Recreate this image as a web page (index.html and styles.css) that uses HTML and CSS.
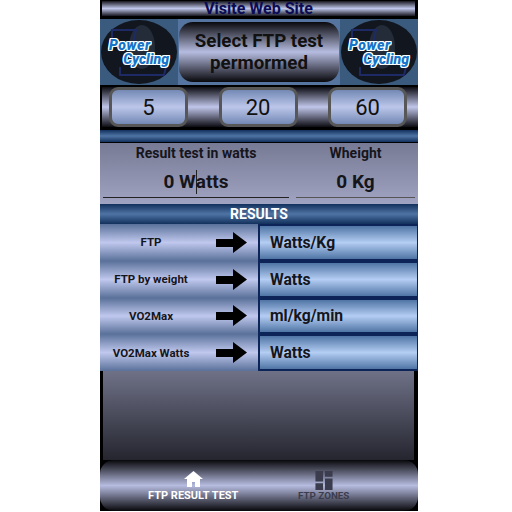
FILE: index.html
```html
<!DOCTYPE html>
<html lang="en">
<head>
  <meta charset="UTF-8">
  <meta name="viewport" content="width=device-width, initial-scale=1.0">
  <title>FTP Test</title>
  <link rel="stylesheet" href="styles.css">
</head>
<body>
  <main class="phone">
    <div class="web-link">Visite Web Site</div>

    <div class="head">
      <div class="logo">
        <svg class="logo-art" viewBox="0 0 78 66">
          <ellipse cx="39" cy="33" rx="38" ry="32" fill="#11161f"/>
          <ellipse cx="42" cy="28" rx="13" ry="22" fill="#232c38"/>
          <path d="M12 24V11h24l-3 14M20 48v8h44l2-8" fill="none" stroke="#1d2a66" stroke-width="2"/>
        </svg>
        <div class="logo-text"><span class="first">Power</span><span class="second">Cycling</span></div>
      </div>
      <div class="title">Select FTP test<br>permormed</div>
      <div class="logo">
        <svg class="logo-art" viewBox="0 0 78 66">
          <ellipse cx="39" cy="33" rx="38" ry="32" fill="#11161f"/>
          <ellipse cx="42" cy="28" rx="13" ry="22" fill="#232c38"/>
          <path d="M12 24V11h24l-3 14M20 48v8h44l2-8" fill="none" stroke="#1d2a66" stroke-width="2"/>
        </svg>
        <div class="logo-text"><span class="first">Power</span><span class="second">Cycling</span></div>
      </div>
    </div>

    <div class="tests">
      <button class="test">5</button>
      <button class="test">20</button>
      <button class="test">60</button>
    </div>

    <div class="blue-bar"></div>

    <div class="inputs">
      <div class="field field-watts">
        <label>Result test in watts</label>
        <div class="value"><span>0 W</span><i class="caret"></i><span>atts</span></div>
      </div>
      <div class="field field-kg">
        <label>Wheight</label>
        <div class="value">0 Kg</div>
      </div>
    </div>

    <div class="blue-bar results-head">RESULTS</div>

    <div class="results">
      <div class="row">
        <div class="name">FTP</div>
        <svg class="arrow" viewBox="0 0 31 21"><path d="M0 7h17V0l14 10.5L17 21v-6H0z"/></svg>
        <div class="unit">Watts/Kg</div>
      </div>
      <div class="row">
        <div class="name">FTP by weight</div>
        <svg class="arrow" viewBox="0 0 31 21"><path d="M0 7h17V0l14 10.5L17 21v-6H0z"/></svg>
        <div class="unit">Watts</div>
      </div>
      <div class="row">
        <div class="name">VO2Max</div>
        <svg class="arrow" viewBox="0 0 31 21"><path d="M0 7h17V0l14 10.5L17 21v-6H0z"/></svg>
        <div class="unit">ml/kg/min</div>
      </div>
      <div class="row">
        <div class="name">VO2Max Watts</div>
        <svg class="arrow" viewBox="0 0 31 21"><path d="M0 7h17V0l14 10.5L17 21v-6H0z"/></svg>
        <div class="unit">Watts</div>
      </div>
    </div>

    <div class="spacer"></div>

    <nav class="nav">
      <div class="tab active">
        <svg viewBox="0 0 19 16"><path d="M9.5 0 0 8h3v8h5v-5h3v5h5V8h3z"/></svg>
        <span>FTP RESULT TEST</span>
      </div>
      <div class="tab">
        <svg viewBox="0 0 18 20"><path d="M0 0h8v11H0zM10 0h8v6h-8zM0 13h8v7H0zM10 8h8v12h-8z"/></svg>
        <span>FTP ZONES</span>
      </div>
    </nav>
  </main>
</body>
</html>
```

FILE: styles.css
```css
* {
  box-sizing: border-box;
}
body {
  margin: 0 0 0 100px;
  background: #fff;
  font-family: Roboto, "Liberation Sans", sans-serif;
}
.phone {
  width: 318px;
  height: 511px;
  background: #000;
  display: flex;
  flex-direction: column;
  color: #000;
}
.web-link {
  height: 15px;
  margin: 1px 3px 0 2px;
  background: linear-gradient(#16161f, #c0c6ea 50%, #16161f);
  color: #0b0b55;
  font-size: 16px;
  font-weight: 700;
  line-height: 15px;
  text-align: center;
}
.head {
  height: 66px;
  margin-top: 3px;
  display: flex;
  background: #55749f;
}
.logo {
  width: 78px;
  background: #3a5a7e;
  position: relative;
  display: flex;
  align-items: center;
  justify-content: center;
  overflow: hidden;
}
.logo-art {
  position: absolute;
  inset: 0;
  width: 78px;
  height: 66px;
}
.logo-text {
  position: relative;
  width: 60px;
  display: flex;
  flex-direction: column;
  color: #1574c8;
  font-size: 14px;
  font-weight: 900;
  font-style: italic;
  line-height: 14px;
  text-shadow: 1px 0 0 #fff, -1px 0 0 #fff, 0 1px 0 #fff, 0 -1px 0 #fff, 1px 1px 0 #fff, -1px -1px 0 #fff, 1px -1px 0 #fff, -1px 1px 0 #fff;
}
.logo-text .first {
  letter-spacing: .6px;
}
.logo-text .second {
  align-self: flex-end;
}
.title {
  flex: 1;
  margin: 3px 1px;
  border-radius: 14px;
  background: linear-gradient(#08080c, #b6bce0 50%, #08080c);
  font-size: 18.7px;
  font-weight: 700;
  line-height: 22px;
  text-align: center;
  display: flex;
  align-items: center;
  justify-content: center;
  color: #111;
}
.tests {
  height: 40px;
  margin: 2px 0 0 2px;
  padding: 0 11px 0 7px;
  display: flex;
  justify-content: space-between;
  align-items: center;
  background: linear-gradient(#0c0c12, #c0c6ea 50%, #0c0c12);
}
.test {
  width: 79px;
  height: 40px;
  border: 3px solid #575757;
  border-radius: 9px;
  background: linear-gradient(#7389b4, #bcc6ea 50%, #7389b4);
  font-family: inherit;
  font-size: 22px;
  color: #111;
  padding: 0;
}
.blue-bar {
  height: 12px;
  margin-top: 3px;
  background: linear-gradient(#12305c, #4f74a4 50%, #12305c);
}
.inputs {
  height: 61px;
  margin-top: 1px;
  display: flex;
  gap: 7px;
  padding: 0 3px 0 3px;
  background: linear-gradient(#777a94, #a0a4c2);
}
.field {
  height: 55px;
  display: flex;
  flex-direction: column;
  align-items: center;
}
.field-watts {
  width: 186px;
  border-bottom: 1px solid #222;
}
.field-kg {
  flex: 1;
  border-bottom: 1px solid #555;
}
.field label {
  margin-top: 2px;
  font-size: 14px;
  font-weight: 700;
  line-height: 16px;
  color: #15151c;
}
.value {
  margin-top: 9px;
  font-size: 19px;
  font-weight: 700;
  line-height: 24px;
  color: #15151c;
  display: flex;
  white-space: pre;
}
.caret {
  width: 1px;
  height: 24px;
  margin-right: -1px;
  background: #222;
}
.results-head {
  height: 20px;
  margin-top: 0;
  color: #fff;
  font-size: 14px;
  font-weight: 700;
  line-height: 20px;
  text-align: center;
}
.results {
  height: 147px;
  display: flex;
  flex-direction: column;
  background: #0c2458;
}
.row {
  flex: 1;
  display: flex;
  align-items: center;
  background: linear-gradient(#5a7199, #c0c8ee 50%, #5a7199);
}
.name {
  width: 102px;
  font-size: 11.5px;
  font-weight: 700;
  text-align: center;
  color: #15151c;
}
.arrow {
  width: 31px;
  height: 21px;
  margin-left: 14px;
}
.unit {
  margin-left: 11px;
  flex: 1;
  align-self: stretch;
  padding-left: 10px;
  border: 2px solid #0c2458;
  border-right-width: 1px;
  background: linear-gradient(#4f75a5, #b4cdf3 50%, #4f75a5);
  font-size: 15.7px;
  font-weight: 700;
  color: #15151c;
  display: flex;
  align-items: center;
}
.spacer {
  height: 89px;
  margin: 0 4px 0 3px;
  background: linear-gradient(#6f7187, #24252e);
}
.nav {
  flex: 1;
  display: flex;
  padding: 0 29px 0 28px;
  border-radius: 14px;
  background: linear-gradient(#08080c, #b6bce0 50%, #08080c);
}
.tab {
  flex: 1;
  display: flex;
  flex-direction: column;
  align-items: center;
  justify-content: flex-end;
  padding-bottom: 9px;
  color: #3b3d4e;
  font-size: 9.8px;
  line-height: 13px;
  font-weight: 700;
}
.tab svg {
  width: 18px;
  height: 19px;
  margin-bottom: -1px;
  fill: #3b3d4e;
}
.tab.active {
  color: #fff;
  font-size: 11px;
}
.tab.active svg {
  width: 19px;
  height: 16px;
  margin-bottom: 2px;
  fill: #fff;
}
```
